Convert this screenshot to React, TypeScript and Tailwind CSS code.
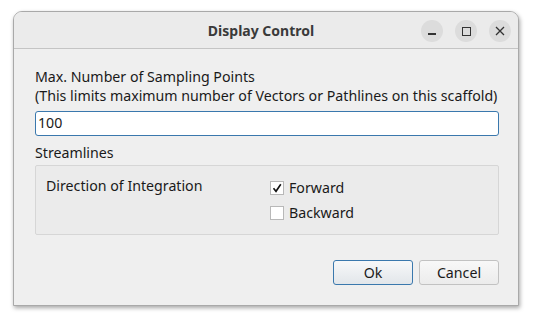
import React from "react";

export default function App() {
  const font = { fontFamily: '"Noto Sans", "Open Sans", sans-serif' };
  return (
    <div className="w-[533px] h-[323px] bg-white pt-[11px] pl-[13px]" style={font}>
      <div className="w-[506px] h-[295px] flex flex-col border border-[#a9a9a9] rounded-t-[9px] bg-[#efefef] shadow-[1px_2px_4px_rgba(0,0,0,0.35)] overflow-hidden">
        <div className="relative h-[37px] shrink-0 bg-[#ebebeb] border-b border-[#c4c4c4] flex items-center justify-center">
          <span className="text-[14px] font-bold text-[#3a3a3a] mr-[10px]">Display Control</span>
          <div className="absolute right-[7px] top-[8px] flex gap-[12px]">
            <div className="w-[22px] h-[22px] rounded-full bg-[#dcdcdc] flex items-center justify-center">
              <div className="w-[8px] h-[1.5px] bg-[#333] mt-[6px]" />
            </div>
            <div className="w-[22px] h-[22px] rounded-full bg-[#dcdcdc] flex items-center justify-center">
              <div className="w-[9px] h-[9px] border border-[#333]" />
            </div>
            <div className="w-[22px] h-[22px] rounded-full bg-[#dcdcdc] flex items-center justify-center">
              <svg width="10" height="10" viewBox="0 0 10 10">
                <path d="M1 1L9 9M9 1L1 9" stroke="#333" strokeWidth="1.3" />
              </svg>
            </div>
          </div>
        </div>
        <div className="flex-1 flex flex-col pl-[21px] pr-[19px] pt-[18px] text-[14.2px] text-[#1a1a1a]">
          <div className="leading-[19px]">
            <div>Max. Number of Sampling Points</div>
            <div>(This limits maximum number of Vectors or Pathlines on this scaffold)</div>
          </div>
          <div className="mt-[6px] h-[25px] border border-[#3a78ad] rounded-[3px] bg-white flex items-center pl-[2px] leading-none">
            100
          </div>
          <div className="mt-[7px] leading-[19px]">Streamlines</div>
          <div className="mt-[3px] h-[70px] border border-[#d6d6d6] rounded-[2px] bg-[#ebebeb] flex pl-[10px] pt-[10px]">
            <div className="w-[224px] leading-[19px]">Direction of Integration</div>
            <div className="flex flex-col gap-[6px] pt-[2px]">
              <div className="flex items-center h-[19px]">
                <div className="w-[14px] h-[14px] border border-[#b8b8b8] bg-white flex items-center justify-center">
                  <svg width="10" height="10" viewBox="0 0 10 10">
                    <path d="M1.5 5.2L4 8.3L8.8 1.2" stroke="#111" strokeWidth="1.6" fill="none" />
                  </svg>
                </div>
                <span className="ml-[5px]">Forward</span>
              </div>
              <div className="flex items-center h-[19px]">
                <div className="w-[14px] h-[14px] border border-[#b8b8b8] bg-white" />
                <span className="ml-[5px]">Backward</span>
              </div>
            </div>
          </div>
          <div className="mt-[25px] flex justify-end gap-[6px]">
            <button className="w-[80px] h-[25px] rounded-[3px] border border-[#3a78ad] bg-gradient-to-b from-[#f7f8f9] to-[#e2e6ea] text-[14.2px] text-[#1a1a1a]">
              Ok
            </button>
            <button className="w-[80px] h-[25px] rounded-[3px] border border-[#c2c2c2] bg-gradient-to-b from-[#f8f8f8] to-[#ececec] text-[14.2px] text-[#1a1a1a]">
              Cancel
            </button>
          </div>
        </div>
      </div>
    </div>
  );
}
